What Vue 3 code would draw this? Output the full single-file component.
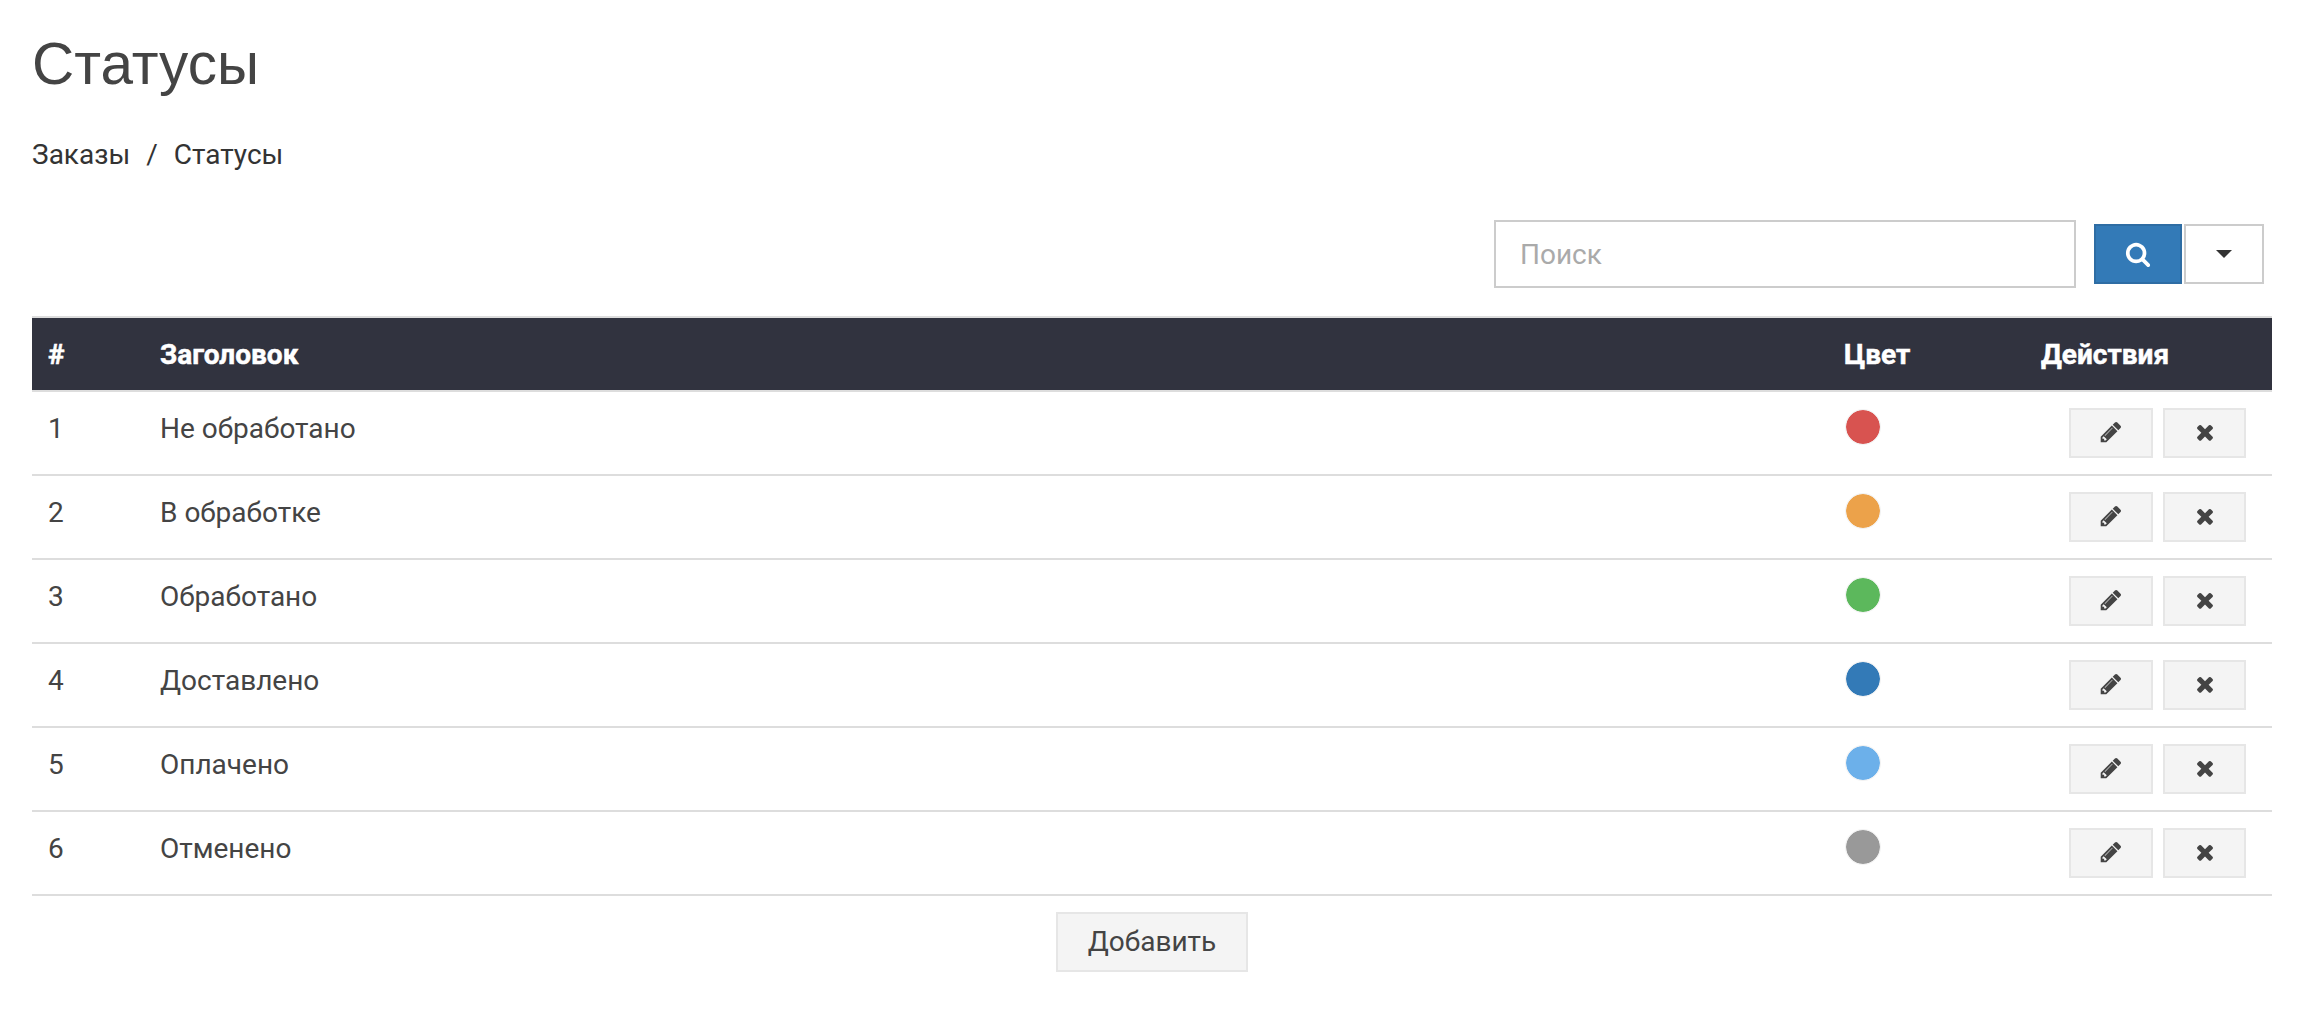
<template>
  <div class="page">
    <h1 class="title">Статусы</h1>
    <div class="crumbs">
      <a>Заказы</a>
      <span class="sep">/</span>
      <a>Статусы</a>
    </div>

    <div class="toolbar">
      <input class="search" type="text" placeholder="Поиск" />
      <button class="btn-search">
        <svg viewBox="0 0 1792 1792" width="26" height="26"><path fill="#fff" :d="icons.search" /></svg>
      </button>
      <button class="btn-menu"><span class="caret"></span></button>
    </div>

    <table class="table">
      <colgroup>
        <col class="col-num" />
        <col />
        <col class="col-color" />
        <col class="col-actions" />
      </colgroup>
      <thead>
        <tr>
          <th>#</th>
          <th>Заголовок</th>
          <th>Цвет</th>
          <th>Действия</th>
        </tr>
      </thead>
      <tbody>
        <tr v-for="(s, i) in statuses" :key="s.title">
          <td>{{ i + 1 }}</td>
          <td>{{ s.title }}</td>
          <td><span class="dot" :style="{ backgroundColor: s.color }"></span></td>
          <td>
            <div class="actions">
              <button class="btn-row edit">
                <svg viewBox="0 0 1792 1792" width="24" height="24"><path fill="#444" :d="icons.pencil" /></svg>
              </button>
              <button class="btn-row del">
                <svg viewBox="0 0 1792 1792" width="24" height="24"><path fill="#444" :d="icons.times" /></svg>
              </button>
            </div>
          </td>
        </tr>
      </tbody>
    </table>

    <div class="footer">
      <button class="btn-add">Добавить</button>
    </div>
  </div>
</template>

<script setup>
const statuses = [
  { title: "Не обработано", color: "#d85350" },
  { title: "В обработке", color: "#eca24a" },
  { title: "Обработано", color: "#5cb85c" },
  { title: "Доставлено", color: "#337ab7" },
  { title: "Оплачено", color: "#6cb0ea" },
  { title: "Отменено", color: "#999999" },
];

const icons = {
  search: "M1216 832q0-185-131.5-316.5t-316.5-131.5-316.5 131.5-131.5 316.5 131.5 316.5 316.5 131.5 316.5-131.5 131.5-316.5zm512 832q0 52-38 90t-90 38q-54 0-90-38l-343-342q-179 124-399 124-143 0-273.5-55.5t-225-150-150-225-55.5-273.5 55.5-273.5 150-225 225-150 273.5-55.5 273.5 55.5 225 150 150 225 55.5 273.5q0 220-124 399l343 343q37 37 37 90z",
  pencil: "M491 1536l91-91-235-235-91 91v107h128v128h107zm523-928q0-22-22-22-10 0-17 7l-542 542q-7 7-7 17 0 22 22 22 10 0 17-7l542-542q7-7 7-17zm-54-192l416 416-832 832h-416v-416zm683 96q0 53-37 90l-166 166-416-416 166-165q36-38 90-38 53 0 91 38l235 234q37 39 37 91z",
  times: "M1490 1322q0 40-28 68l-136 136q-28 28-68 28t-68-28l-294-294-294 294q-28 28-68 28t-68-28l-136-136q-28-28-28-68t28-68l294-294-294-294q-28-28-28-68t28-68l136-136q28-28 68-28t68 28l294 294 294-294q28-28 68-28t68 28l136 136q28 28 28 68t-28 68l-294 294 294 294q28 28 28 68z",
};
</script>

<style>
body {
  background: #fff;
}
</style>

<style scoped>
.page {
  padding: 0 32px;
  font-family: Roboto, "Liberation Sans", sans-serif;
  font-size: 28px;
  line-height: 40px;
  color: #444;
}

.title {
  margin: 0;
  padding-top: 26px;
  font-family: "Liberation Sans", Arial, sans-serif;
  font-size: 58.5px;
  font-weight: 400;
  line-height: 76px;
  color: #444;
}

.crumbs {
  display: flex;
  margin-top: 33px;
  color: #333;
}

.sep {
  margin: 0 16px;
}

.toolbar {
  display: flex;
  align-items: center;
  justify-content: flex-end;
  margin-top: 45px;
  padding-right: 8px;
}

.search {
  box-sizing: border-box;
  width: 582px;
  height: 68px;
  padding: 0 24px;
  border: 2px solid #ccc;
  outline: none;
  font: inherit;
  color: #444;
  background: #fff;
}

.search::placeholder {
  color: #aaa;
  opacity: 1;
}

button {
  box-sizing: border-box;
  display: flex;
  align-items: center;
  justify-content: center;
  padding: 0;
  font: inherit;
  color: #444;
}

.btn-search {
  width: 88px;
  height: 60px;
  margin-left: 18px;
  border: 2px solid #2e6da4;
  background: #337ab7;
}

.btn-menu {
  width: 80px;
  height: 60px;
  margin-left: 2px;
  border: 2px solid #ccc;
  background: #fff;
}

.caret {
  width: 0;
  height: 0;
  border-top: 8px solid #333;
  border-left: 8px solid transparent;
  border-right: 8px solid transparent;
}

.table {
  width: 100%;
  margin-top: 28px;
  border-collapse: separate;
  border-spacing: 0;
  table-layout: fixed;
  border-top: 2px solid #ddd;
}

.col-num {
  width: 112px;
}

.col-color {
  width: 197px;
}

.col-actions {
  width: 247px;
}

th {
  padding: 17px 16px 15px;
  border-bottom: 2px solid #ddd;
  background: #31333f;
  color: #fff;
  font-weight: 700;
  text-align: left;
  -webkit-text-stroke: 0.5px #fff;
}

td {
  padding: 17px 16px 16px;
  border-bottom: 2px solid #ddd;
  vertical-align: top;
}

.dot {
  display: block;
  box-sizing: border-box;
  width: 36px;
  height: 36px;
  margin-left: 1px;
  border: 1px solid #f2f2f2;
  border-radius: 50%;
  background-clip: padding-box;
}

.actions {
  display: flex;
  justify-content: flex-end;
  gap: 10px;
  margin-top: -1px;
  margin-right: 10px;
}

.btn-row {
  height: 50px;
  border: 2px solid #e6e6e6;
  background: #f4f4f4;
}

.btn-row svg {
  margin-top: -2px;
}

.edit {
  width: 84px;
}

.del {
  width: 83px;
}

.footer {
  display: flex;
  justify-content: center;
  margin-top: 16px;
}

.btn-add {
  width: 192px;
  height: 60px;
  border: 2px solid #e6e6e6;
  background: #f4f4f4;
}
</style>
